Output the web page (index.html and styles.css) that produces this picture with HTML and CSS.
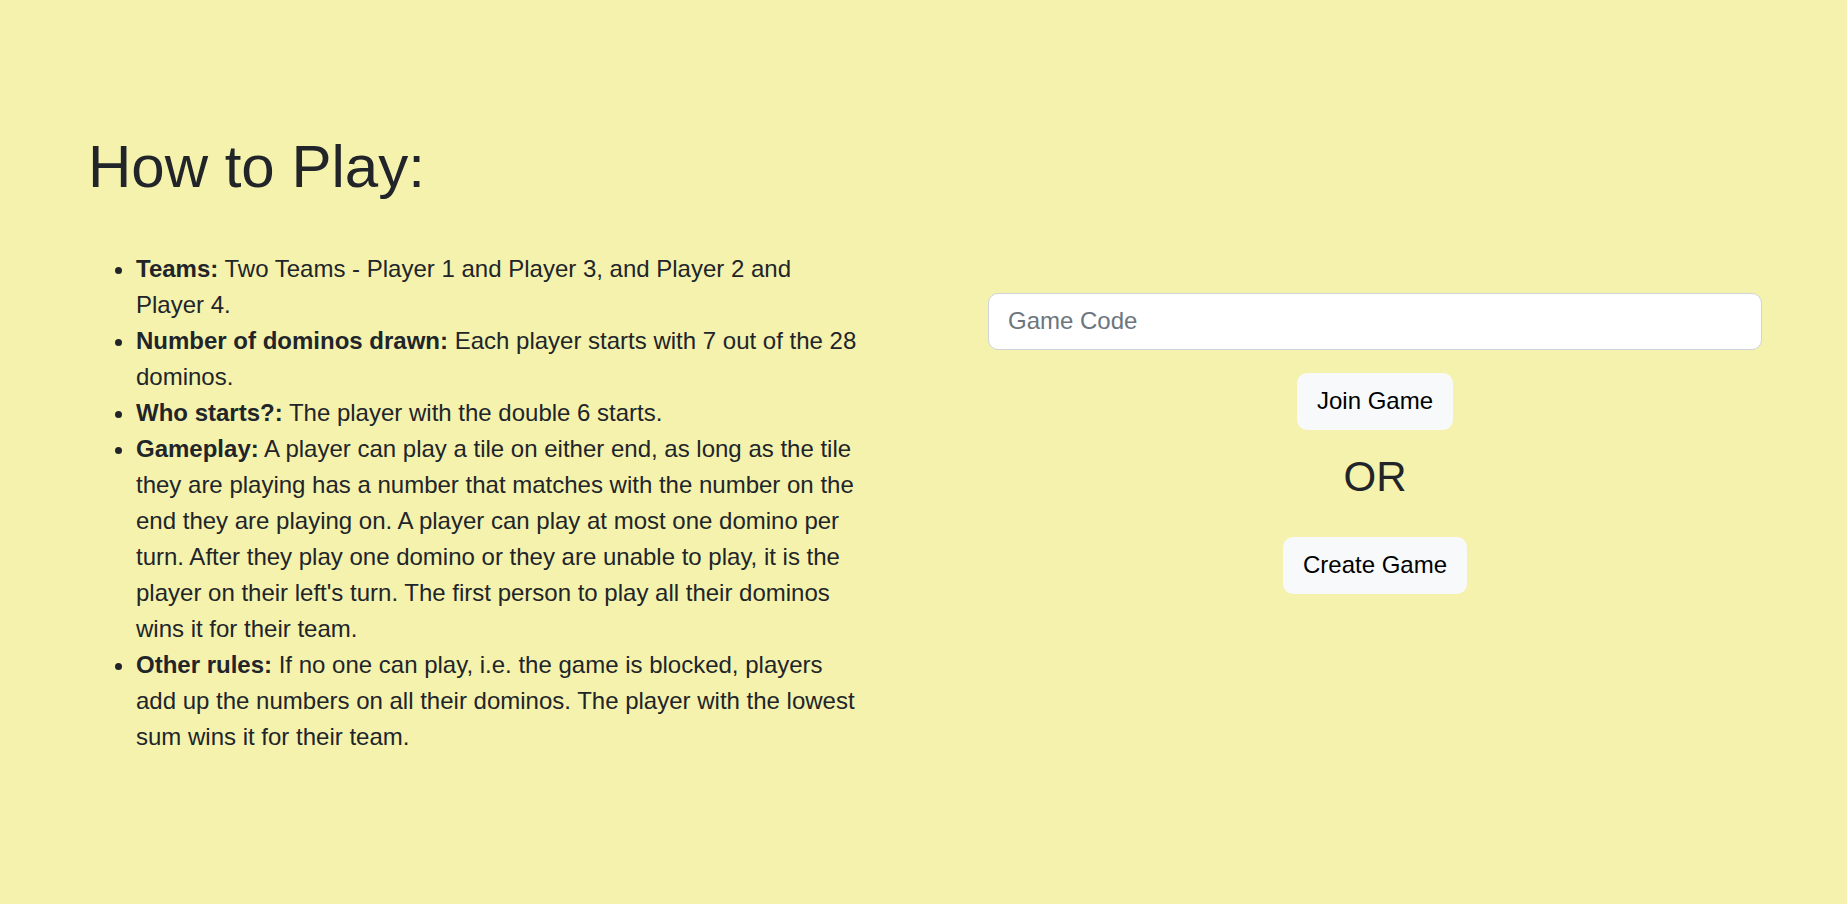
FILE: index.html
```
<!DOCTYPE html>
<html lang="en">
<head>
<meta charset="utf-8">
<title>Dominos</title>
<link rel="stylesheet" href="styles.css">
</head>
<body>
<main class="page">
  <section class="rules">
    <h1 class="rules-title">How to Play:</h1>
    <ul class="rules-list">
      <li><strong>Teams:</strong> Two Teams - Player 1 and Player 3, and Player 2 and Player 4.</li>
      <li><strong>Number of dominos drawn:</strong> Each player starts with 7 out of the 28 dominos.</li>
      <li><strong>Who starts?:</strong> The player with the double 6 starts.</li>
      <li><strong>Gameplay:</strong> A player can play a tile on either end, as long as the tile they are playing has a number that matches with the number on the end they are playing on. A player can play at most one domino per turn. After they play one domino or they are unable to play, it is the player on their left's turn. The first person to play all their dominos wins it for their team.</li>
      <li><strong>Other rules:</strong> If no one can play, i.e. the game is blocked, players add up the numbers on all their dominos. The player with the lowest sum wins it for their team.</li>
    </ul>
  </section>
  <form class="join">
    <input class="code" type="text" placeholder="Game Code" aria-label="Game Code">
    <button class="btn" type="button">Join Game</button>
    <h2 class="or">OR</h2>
    <button class="btn" type="button">Create Game</button>
  </form>
</main>
</body>
</html>
```
FILE: styles.css
```
* {
  box-sizing: border-box;
}

body {
  margin: 0;
  background: #f5f2ad;
  color: #212529;
  font-family: "Liberation Sans", Arial, sans-serif;
  font-size: 24px;
  line-height: 36px;
}

.page {
  display: grid;
  grid-template-columns: 1fr 1fr;
  align-items: center;
  gap: 126px;
  min-height: 100vh;
  padding: 0 85px 18px 88px;
}

.rules-title {
  margin: 0 0 48px;
  font-size: 60px;
  font-weight: 400;
  line-height: 72px;
}

.rules-list {
  margin: 0;
  padding: 0 0 0 48px;
}

.join {
  display: flex;
  flex-direction: column;
  align-items: center;
}

.code {
  width: 100%;
  height: 57px;
  margin-bottom: 23px;
  padding: 0 19px;
  border: 1px solid #ced4da;
  border-radius: 10px;
  background: #fff;
  color: #212529;
  font: inherit;
}

.code::placeholder {
  color: #6c757d;
  opacity: 1;
}

.btn {
  height: 57px;
  padding: 0 20px;
  border: 0;
  border-radius: 10px;
  background: #f8f9fa;
  color: #000;
  font: inherit;
}

.or {
  margin: 22px 0 35px;
  font-size: 42px;
  font-weight: 400;
  line-height: 50px;
}
```
